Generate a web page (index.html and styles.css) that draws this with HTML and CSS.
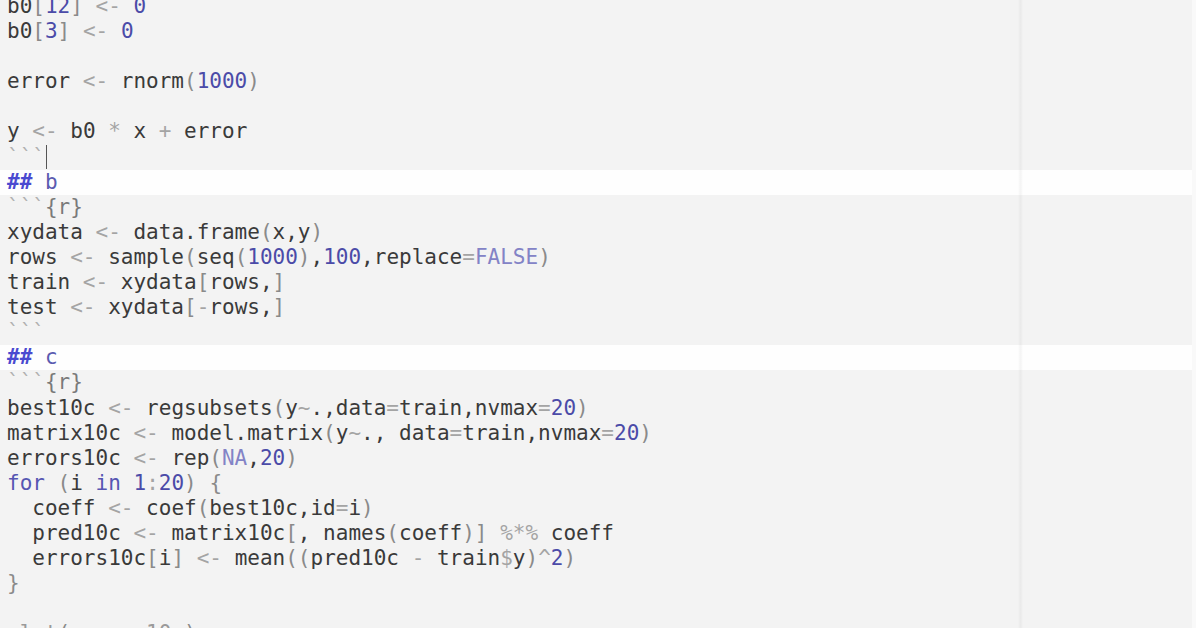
FILE: index.html
```html
<!DOCTYPE html>
<html>
<head>
<meta charset="utf-8">
<link rel="stylesheet" href="styles.css">
</head>
<body>
<div class="window">
  <div class="editor">
    <div class="margin-line"></div>
    <div class="lines">
      <div class="ln chunk">b0<span class="p">[</span><span class="n">12</span><span class="p">]</span> <span class="o">&lt;-</span> <span class="n">0</span></div>
      <div class="ln chunk">b0<span class="p">[</span><span class="n">3</span><span class="p">]</span> <span class="o">&lt;-</span> <span class="n">0</span></div>
      <div class="ln chunk"></div>
      <div class="ln chunk">error <span class="o">&lt;-</span> rnorm<span class="p">(</span><span class="n">1000</span><span class="p">)</span></div>
      <div class="ln chunk"></div>
      <div class="ln chunk">y <span class="o">&lt;-</span> b0 <span class="o">*</span> x <span class="o">+</span> error</div>
      <div class="ln chunk"><span class="bt">```</span><span class="cursor"></span></div>
      <div class="ln md"><span class="hh">##</span> <span class="ht">b</span></div>
      <div class="ln chunk"><span class="bt">```</span><span class="rt">{r}</span></div>
      <div class="ln chunk">xydata <span class="o">&lt;-</span> data.frame<span class="p">(</span>x,y<span class="p">)</span></div>
      <div class="ln chunk">rows <span class="o">&lt;-</span> sample<span class="p">(</span>seq<span class="p">(</span><span class="n">1000</span><span class="p">)</span>,<span class="n">100</span>,replace<span class="o">=</span><span class="c">FALSE</span><span class="p">)</span></div>
      <div class="ln chunk">train <span class="o">&lt;-</span> xydata<span class="p">[</span>rows,<span class="p">]</span></div>
      <div class="ln chunk">test <span class="o">&lt;-</span> xydata<span class="p">[</span><span class="o">-</span>rows,<span class="p">]</span></div>
      <div class="ln chunk"><span class="bt">```</span></div>
      <div class="ln md"><span class="hh">##</span> <span class="ht">c</span></div>
      <div class="ln chunk"><span class="bt">```</span><span class="rt">{r}</span></div>
      <div class="ln chunk">best10c <span class="o">&lt;-</span> regsubsets<span class="p">(</span>y<span class="o">~</span>.,data<span class="o">=</span>train,nvmax<span class="o">=</span><span class="n">20</span><span class="p">)</span></div>
      <div class="ln chunk">matrix10c <span class="o">&lt;-</span> model.matrix<span class="p">(</span>y<span class="o">~</span>., data<span class="o">=</span>train,nvmax<span class="o">=</span><span class="n">20</span><span class="p">)</span></div>
      <div class="ln chunk">errors10c <span class="o">&lt;-</span> rep<span class="p">(</span><span class="c">NA</span>,<span class="n">20</span><span class="p">)</span></div>
      <div class="ln chunk"><span class="k">for</span> <span class="p">(</span>i <span class="k">in</span> <span class="n">1</span><span class="o">:</span><span class="n">20</span><span class="p">)</span> <span class="p">{</span></div>
      <div class="ln chunk">  coeff <span class="o">&lt;-</span> coef<span class="p">(</span>best10c,id<span class="o">=</span>i<span class="p">)</span></div>
      <div class="ln chunk">  pred10c <span class="o">&lt;-</span> matrix10c<span class="p">[</span>, names<span class="p">(</span>coeff<span class="p">)]</span> <span class="o">%*%</span> coeff</div>
      <div class="ln chunk">  errors10c<span class="p">[</span>i<span class="p">]</span> <span class="o">&lt;-</span> mean<span class="p">((</span>pred10c <span class="o">-</span> train<span class="o">$</span>y<span class="p">)</span><span class="o">^</span><span class="n">2</span><span class="p">)</span></div>
      <div class="ln chunk"><span class="p">}</span></div>
      <div class="ln chunk"></div>
      <div class="ln chunk faint">plot<span class="p">(</span>errors10c<span class="p">)</span></div>
    </div>
  </div>
  <div class="edge"></div>
</div>
</body>
</html>
```

FILE: styles.css
```css
html, body {
  margin: 0;
  padding: 0;
  height: 100%;
  overflow: hidden;
  background: #f3f3f3;
}

.window {
  display: flex;
  width: 1196px;
  height: 628px;
  overflow: hidden;
}

.editor {
  position: relative;
  flex: 1;
  overflow: hidden;
}

.edge {
  width: 4px;
  background: #f9f9f9;
}

.lines {
  display: flex;
  flex-direction: column;
  margin-top: -6px;
  font-family: "DejaVu Sans Mono", "Liberation Mono", monospace;
  font-size: 21px;
  color: #3a3a3a;
}

.ln {
  height: 25.1px;
  line-height: 25.1px;
  padding-left: 7px;
  white-space: pre;
  flex: none;
}

.chunk { background: #f3f3f3; }
.md { background: #fefefe; }

.margin-line {
  position: absolute;
  top: 0;
  bottom: 0;
  left: 1018px;
  width: 5px;
  background: linear-gradient(to right, rgba(0,0,0,0), rgba(0,0,0,0.035) 40%, rgba(0,0,0,0.035) 60%, rgba(0,0,0,0));
  z-index: 2;
}

.o { color: #a4a4a4; }
.p { color: #8a8a8a; }
.n { color: #4b4ba8; }
.c { color: #8383c6; }
.k { color: #5656b2; }
.bt { color: #b0b0b0; }
.rt { color: #7a7a7a; }
.hh { color: #4a4ad0; font-weight: bold; }
.ht { color: #5b5bb0; }

.cursor {
  display: inline-block;
  width: 0;
  height: 24px;
  border-left: 1.5px solid #555;
  vertical-align: top;
  margin-left: 1px;
}

.faint { color: #9a9a9a; }
```
